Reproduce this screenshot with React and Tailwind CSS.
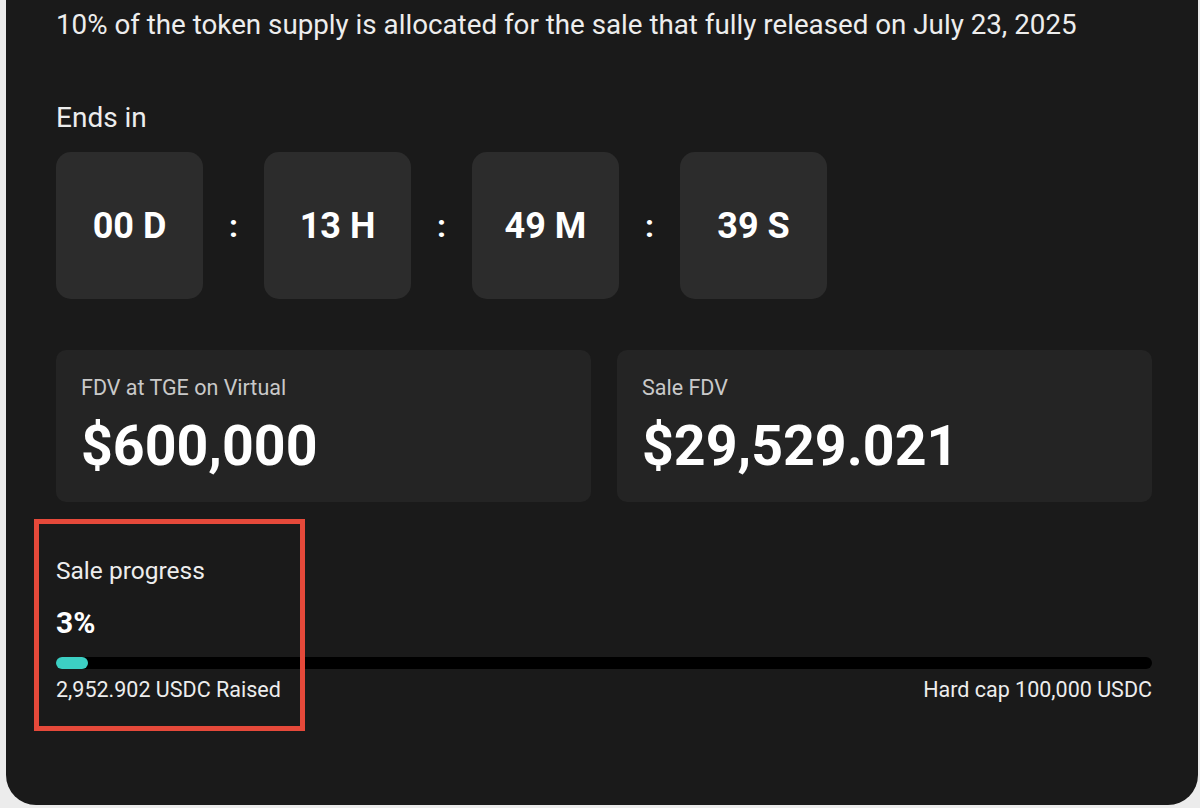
const TIMER = ["00 D", "13 H", "49 M", "39 S"];

const STATS = [
    { label: "FDV at TGE on Virtual", value: "$600,000" },
    { label: "Sale FDV", value: "$29,529.021" },
];

export default function App() {
    const progress = 3;

    return (
        <div className="h-[808px] w-[1200px] overflow-hidden bg-[#ececec] font-['Roboto',sans-serif]">
            <div className="relative ml-[6px] h-[805px] w-[1192px] rounded-b-[30px] bg-[#1a1a1a] pl-[50px] pr-[46px] pt-[7px] text-[#ededed]">
                <p className="text-[27.75px] leading-[36px]">
                    10% of the token supply is allocated for the sale that fully released on July 23, 2025
                </p>

                <p className="mt-[57px] text-[28px] leading-[36px]">Ends in</p>

                <div className="mt-[16px] flex items-center">
                    {TIMER.map((t, i) => (
                        <div key={t} className="flex items-center">
                            {i > 0 && (
                                <span className="w-[61px] text-center text-[32px] font-bold text-white">:</span>
                            )}
                            <div className="flex h-[147px] w-[147px] items-center justify-center rounded-[15px] bg-[#2c2c2c] text-[36px] font-bold text-white">
                                {t}
                            </div>
                        </div>
                    ))}
                </div>

                <div className="mt-[51px] grid grid-cols-2 gap-[26px]">
                    {STATS.map((s) => (
                        <div key={s.label} className="h-[152px] rounded-[10px] bg-[#242424] pl-[25px] pt-[24px]">
                            <p className="text-[21.5px] leading-[28px] text-[#c9c9c9]">{s.label}</p>
                            <p className="mt-[13px] text-[55.5px] font-bold leading-[64px] text-white">{s.value}</p>
                        </div>
                    ))}
                </div>

                <p className="mt-[53px] text-[24.5px] leading-[32px]">Sale progress</p>
                <p className="mt-[18px] text-[30px] font-bold leading-[36px] text-white">{progress}%</p>

                <div className="mt-[16px] h-[12px] w-full rounded-full bg-black">
                    <div className="h-full w-[32px] rounded-full bg-[#3ccfc3]" />
                </div>

                <div className="mt-[7px] flex justify-between text-[21.5px] leading-[28px]">
                    <span>2,952.902 USDC Raised</span>
                    <span>Hard cap 100,000 USDC</span>
                </div>

                {/* annotation box */}
                <div className="absolute left-[28px] top-[519px] h-[212px] w-[271px] border-[5px] border-[#e5493a]" />
            </div>
        </div>
    );
}
